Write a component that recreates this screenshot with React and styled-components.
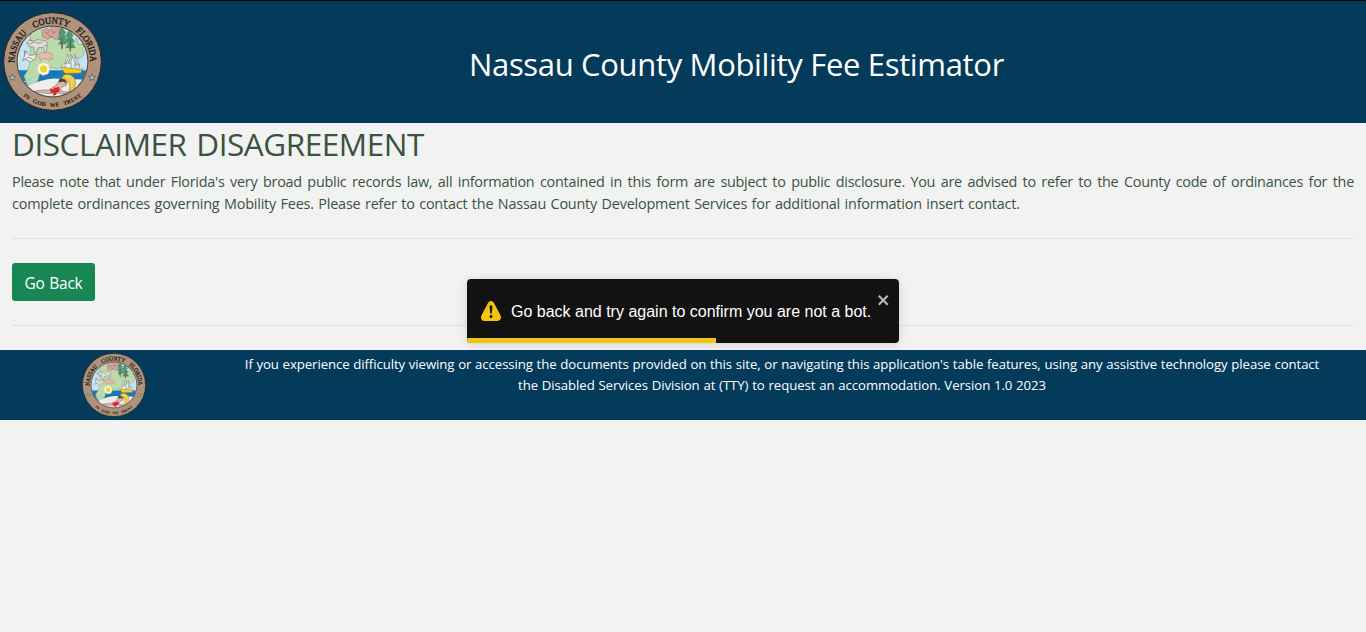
import React, { useId } from "react";
import styled, { createGlobalStyle } from "styled-components";

const GlobalStyle = createGlobalStyle`
  *, *::before, *::after { box-sizing: border-box; }
  body {
    margin: 0;
    background: #f2f2f2;
    color: #3a523f;
    font-family: "Open Sans", "Noto Sans", sans-serif;
    font-size: 16px;
    line-height: 1.5;
  }
`;

const Header = styled.header`
  display: flex;
  align-items: center;
  height: 123px;
  padding: 0 0 1px 3px;
  border-top: 1px solid #05090c;
  background: #043a5a;
`;

const Title = styled.h1`
  flex: 1;
  margin: 7px 0 0 5px;
  color: #fff;
  font-size: 31px;
  font-weight: 400;
  line-height: 1.2;
  text-align: center;
  letter-spacing: -0.33px;
`;

const Main = styled.main`
  padding: 2px 12px 0;
`;

const Heading = styled.h2`
  margin: 0 0 8px;
  font-size: 31.5px;
  font-weight: 400;
  line-height: 38px;
  letter-spacing: -0.46px;
  word-spacing: 2px;
`;

const Notice = styled.p`
  margin: 0;
  font-size: 14.4px;
  line-height: 21.6px;
`;

const Line = styled.span`
  display: block;
  white-space: nowrap;
  letter-spacing: ${(p) => p.$tracking || 0}px;
  word-spacing: ${(p) => (p.$justify ? 0 : 1)}px;
  text-align-last: ${(p) => (p.$justify ? "justify" : "left")};
`;

const Rule = styled.hr`
  height: 1px;
  margin: 24px 0;
  border: 0;
  background: #dfe0df;
`;

const Button = styled.button`
  display: block;
  width: 83px;
  height: 38px;
  padding: 2px 0 0;
  border: 0;
  border-radius: 3px;
  background: #198754;
  color: #fff;
  font: 400 15.5px/24px "Open Sans", sans-serif;
  letter-spacing: -0.25px;
  word-spacing: 1px;
`;

const Footer = styled.footer`
  display: flex;
  height: 70px;
  padding: 3px 0 0 82px;
  background: #043a5a;
  color: #fff;
`;

const FooterText = styled.div`
  width: 1074px;
  margin-left: 99px;
  padding-top: 1px;
  font-size: 13.2px;
  line-height: 21px;
  text-align: center;
  white-space: nowrap;
`;

const FooterLine = styled.div`
  display: flex;
  justify-content: center;
  letter-spacing: ${(p) => p.$tracking}px;
  word-spacing: 0.4px;
`;

const Toast = styled.div`
  position: fixed;
  top: 279px;
  left: 467px;
  display: flex;
  align-items: center;
  width: 432px;
  height: 64px;
  padding-left: 14px;
  overflow: hidden;
  border-radius: 4px;
  background: #121212;
  color: #fff;
  font: 16px/20px "Liberation Sans", Arial, sans-serif;
`;

const ToastShadow = styled.div`
  position: fixed;
  top: 279px;
  left: 467px;
  width: 432px;
  height: 64px;
  border-radius: 4px;
  box-shadow: 0 1px 10px rgba(0, 0, 0, 0.1), 0 2px 15px rgba(0, 0, 0, 0.05);
`;

const ToastText = styled.span`
  margin-left: 10px;
  padding-top: 2px;
  white-space: nowrap;
`;

const Close = styled.button`
  position: absolute;
  top: 13px;
  right: 8px;
  width: 14px;
  height: 16px;
  padding: 0;
  border: 0;
  background: transparent;
  color: #b8b8b8;
  svg { display: block; }
`;

const Progress = styled.div`
  position: absolute;
  bottom: 0;
  left: 0;
  width: 249px;
  height: 5px;
  background: #f1c40f;
`;

const SealSvg = styled.svg`
  display: block;
  flex: none;
  width: ${(p) => p.$size}px;
  height: ${(p) => p.$size}px;
`;

function Seal({ size }) {
  const id = useId();
  const top = `${id}top`;
  const bottom = `${id}bottom`;
  const clip = `${id}clip`;
  return (
    <SealSvg $size={size} viewBox="10 36 298 298" role="img" aria-label="Nassau County seal">
      <defs>
        <path id={top} d="M45.5 193 A113.8 113.8 0 1 1 272.5 193" />
        <path id={bottom} d="M36 245 A137 137 0 0 0 282 245" />
        <clipPath id={clip}><circle cx="159" cy="185" r="105" /></clipPath>
      </defs>
      <circle cx="159" cy="185" r="147" fill="#ae927b" stroke="#27221f" strokeWidth="3" />
      <g clipPath={`url(#${clip})`}>
        <path d="M50 75h220v150H50z" fill="#c4e4f4" />
        <path d="M50 211h220v45H50z" fill="#1878b8" />
        <path d="M50 211q55 5 107 20l110 6v60H50z" fill="#1878b8" />
        <path d="M92 100l24-14 26 13 36 20 45 4 7-8 9 20 10-3 4 34-12 9-26-2-10 20-13-1-15 15-24-4-10 22-22-5-6 23-18 20-15-11-9-23 13-20 6-25 1-49z" fill="#bddba9" stroke="#6f9965" strokeWidth="1.5" />
        <path d="M83 259q45-21 79-23l105 4v62H83z" fill="#eeedea" />
        <path d="M75 257q24-5 38-15M65 248q22-4 37-18" fill="none" stroke="#9fcde2" strokeWidth="4" />
        <path d="M128 92l15-9 6 8 8-12 18 6 8-8-2 31-13 11-10-8-15 7-15-8z" fill="#d6a29c" stroke="#9b7770" strokeWidth="2" />
        <path d="M135 96l9 5 6-8m8-4l4 13 10-10m-26 15l13 4" fill="none" stroke="#856963" strokeWidth="2" />
        <path d="M187 79l-10 23h6l-8 18h9l-7 13h23l-6-14h7l-7-18h6zM211 86l-13 24h7l-9 18h11l-8 16h29l-11-17h8l-9-18h6z" fill="#4f9871" stroke="#3f795b" />
        <path d="M188 128v20m24-8v15m-25-40v30m26-28v35" stroke="#6f594d" strokeWidth="3" />
        <path d="M81 132l10-12 10 4 12-5 24 3 7 8-3 24-5 4-4-16-17 2-4 15-6 1-3-18-15-2-4-6z" fill="#dedfd9" stroke="#777d79" strokeWidth="2" />
        <path d="M80 125l7 9 14-6-11-10m14 8l10 4 14-2m5 7l8 4" fill="none" stroke="#777" strokeWidth="2" />
        <path d="M112 166l15-8 25 1 9 8-3 13-6-6-4 9-7-7h-13l-5 8-3-11z" fill="#e4b9b0" stroke="#b98f89" strokeWidth="2" />
        <path d="M76 154l14 13 22-4-7 17-12 6-16-8-8 5 5-12zm7 2l-9-3 2 14" fill="#f0eee8" stroke="#777" strokeWidth="2" />
        <path d="M75 178l13-6 13 7" fill="none" stroke="#60696b" strokeWidth="2" />
        <g fill="#fffdf2" stroke="#b7bb9a">
          {[0, 45, 90, 135, 180, 225, 270, 315].map((angle) => (
            <circle key={angle} cx="132" cy="194" r="7" transform={`rotate(${angle} 132 207)`} />
          ))}
          <circle cx="132" cy="207" r="17" />
        </g>
        <circle cx="132" cy="207" r="11" fill="#f3d42b" />
        <path d="M184 202l62 7 4-3-6 14-48 1z" fill="#f3ce20" stroke="#8f7725" strokeWidth="2" />
        <path d="M198 202v-11h15l2 12m12-1v-9h13v11" fill="#efefe7" stroke="#7d8174" strokeWidth="2" />
        <path d="M215 202l-1-40-18 33m18-31l23 38m-11-2v-37l-14 22m14-20l13 31m-43-4l8-30 9 29" fill="#e9eee9" stroke="#777f7c" strokeWidth="1.5" />
        <path d="M187 236q4-14 21-12 20 5 20 26 0 11-8 25l-12 2q7-21-2-32-9-6-19 1z" fill="#ecc638" stroke="#a28a3c" strokeWidth="2" />
        <path d="M194 229q24 1 24 34m-13-36q19 4 18 24" fill="none" stroke="#f5df71" strokeWidth="3" />
        <path d="M177 249q1-12 12-12l13 7-2 13-12 4-7 11 18 5 18-4-2 6-28 3-21-5-13 5-45-5v-4l42-3 16-11z" fill="#dcb7a8" stroke="#8a7770" strokeWidth="2" />
        <path d="M176 248l5-12 16 3 5 14-9-7-12 1z" fill="#4b403d" />
        <path d="M151 267l10 2 3-7 5 3 8-5 3 8-1 9-7 1-2 7-10 3 2-9-8 1z" fill="#da252a" />
      </g>
      <circle cx="159" cy="185" r="107" fill="none" stroke="#3c3732" strokeWidth="2.5" />
      <g fill="#111" fontFamily="Liberation Serif, serif">
        <g fontSize="28" stroke="#111" strokeWidth="0.9">
          <text><textPath href={`#${top}`} startOffset="4" textLength="99" lengthAdjust="spacingAndGlyphs">NASSAU</textPath></text>
          <text><textPath href={`#${top}`} startOffset="129" textLength="108" lengthAdjust="spacingAndGlyphs">COUNTY</textPath></text>
          <text><textPath href={`#${top}`} startOffset="261" textLength="106" lengthAdjust="spacingAndGlyphs">FLORIDA</textPath></text>
        </g>
        <text fontSize="18" fontWeight="700"><textPath href={`#${bottom}`} startOffset="50%" textAnchor="middle" wordSpacing="8" letterSpacing="0.3">IN GOD WE TRUST</textPath></text>
      </g>
      {[38, 278].map((x) => (
        <path key={x} transform={`translate(${x} 233)`} d="M0-10L3-3H10L4 2 6 9 0 5-6 9-4 2-10-3H-3Z" fill="#b6c8d1" stroke="#46545c" strokeWidth="2" />
      ))}
    </SealSvg>
  );
}

export default function App() {
  return (
    <>
      <GlobalStyle />
      <Header>
        <Seal size={99} />
        <Title>Nassau County Mobility Fee Estimator</Title>
      </Header>
      <Main>
        <Heading>DISCLAIMER DISAGREEMENT</Heading>
        <Notice>
          <Line $justify $tracking={-0.25}>Please note that under Florida's very broad public records law, all information contained in this form are subject to public disclosure. You are advised to refer to the County code of ordinances for the</Line>
          <Line $tracking={-0.2}>complete ordinances governing Mobility Fees. Please refer to contact the Nassau County Development Services for additional information insert contact.</Line>
        </Notice>
        <Rule />
        <Button type="button">Go Back</Button>
        <Rule />
      </Main>
      <Footer>
        <Seal size={64} />
        <FooterText>
          <FooterLine $tracking={-0.08}>If you experience difficulty viewing or accessing the documents provided on this site, or navigating this application's table features, using any assistive technology please contact</FooterLine>
          <FooterLine $tracking={-0.06}>the Disabled Services Division at (TTY) to request an accommodation. Version 1.0 2023</FooterLine>
        </FooterText>
      </Footer>
      <ToastShadow />
      <Toast role="alert">
        <svg width="20" height="20" viewBox="0 0 24 24" fill="#f1c40f">
          <path d="M23.32 17.191L15.438 2.184C14.728.833 13.416 0 11.996 0c-1.42 0-2.733.833-3.443 2.184L.533 17.448a4.744 4.744 0 000 4.368C1.243 23.167 2.555 24 3.975 24h16.05C22.22 24 24 22.044 24 19.632c0-.904-.251-1.746-.68-2.44zm-9.622 1.46c0 1.033-.724 1.823-1.698 1.823s-1.698-.79-1.698-1.822v-.043c0-1.028.724-1.822 1.698-1.822s1.698.79 1.698 1.822v.043zm.039-12.285l-.84 8.06c-.057.581-.408.943-.897.943-.49 0-.84-.367-.896-.942l-.84-8.065c-.057-.624.25-1.095.779-1.095h1.91c.528.005.84.476.784 1.1z" />
        </svg>
        <ToastText>Go back and try again to confirm you are not a bot.</ToastText>
        <Close type="button" aria-label="close">
          <svg width="14" height="16" viewBox="0 0 14 16" fill="currentColor">
            <path fillRule="evenodd" d="M7.71 8.23l3.75 3.75-1.48 1.48-3.75-3.75-3.75 3.75L1 11.98l3.75-3.75L1 4.48 2.48 3l3.75 3.75L9.98 3l1.48 1.48-3.75 3.75z" />
          </svg>
        </Close>
        <Progress />
      </Toast>
    </>
  );
}
